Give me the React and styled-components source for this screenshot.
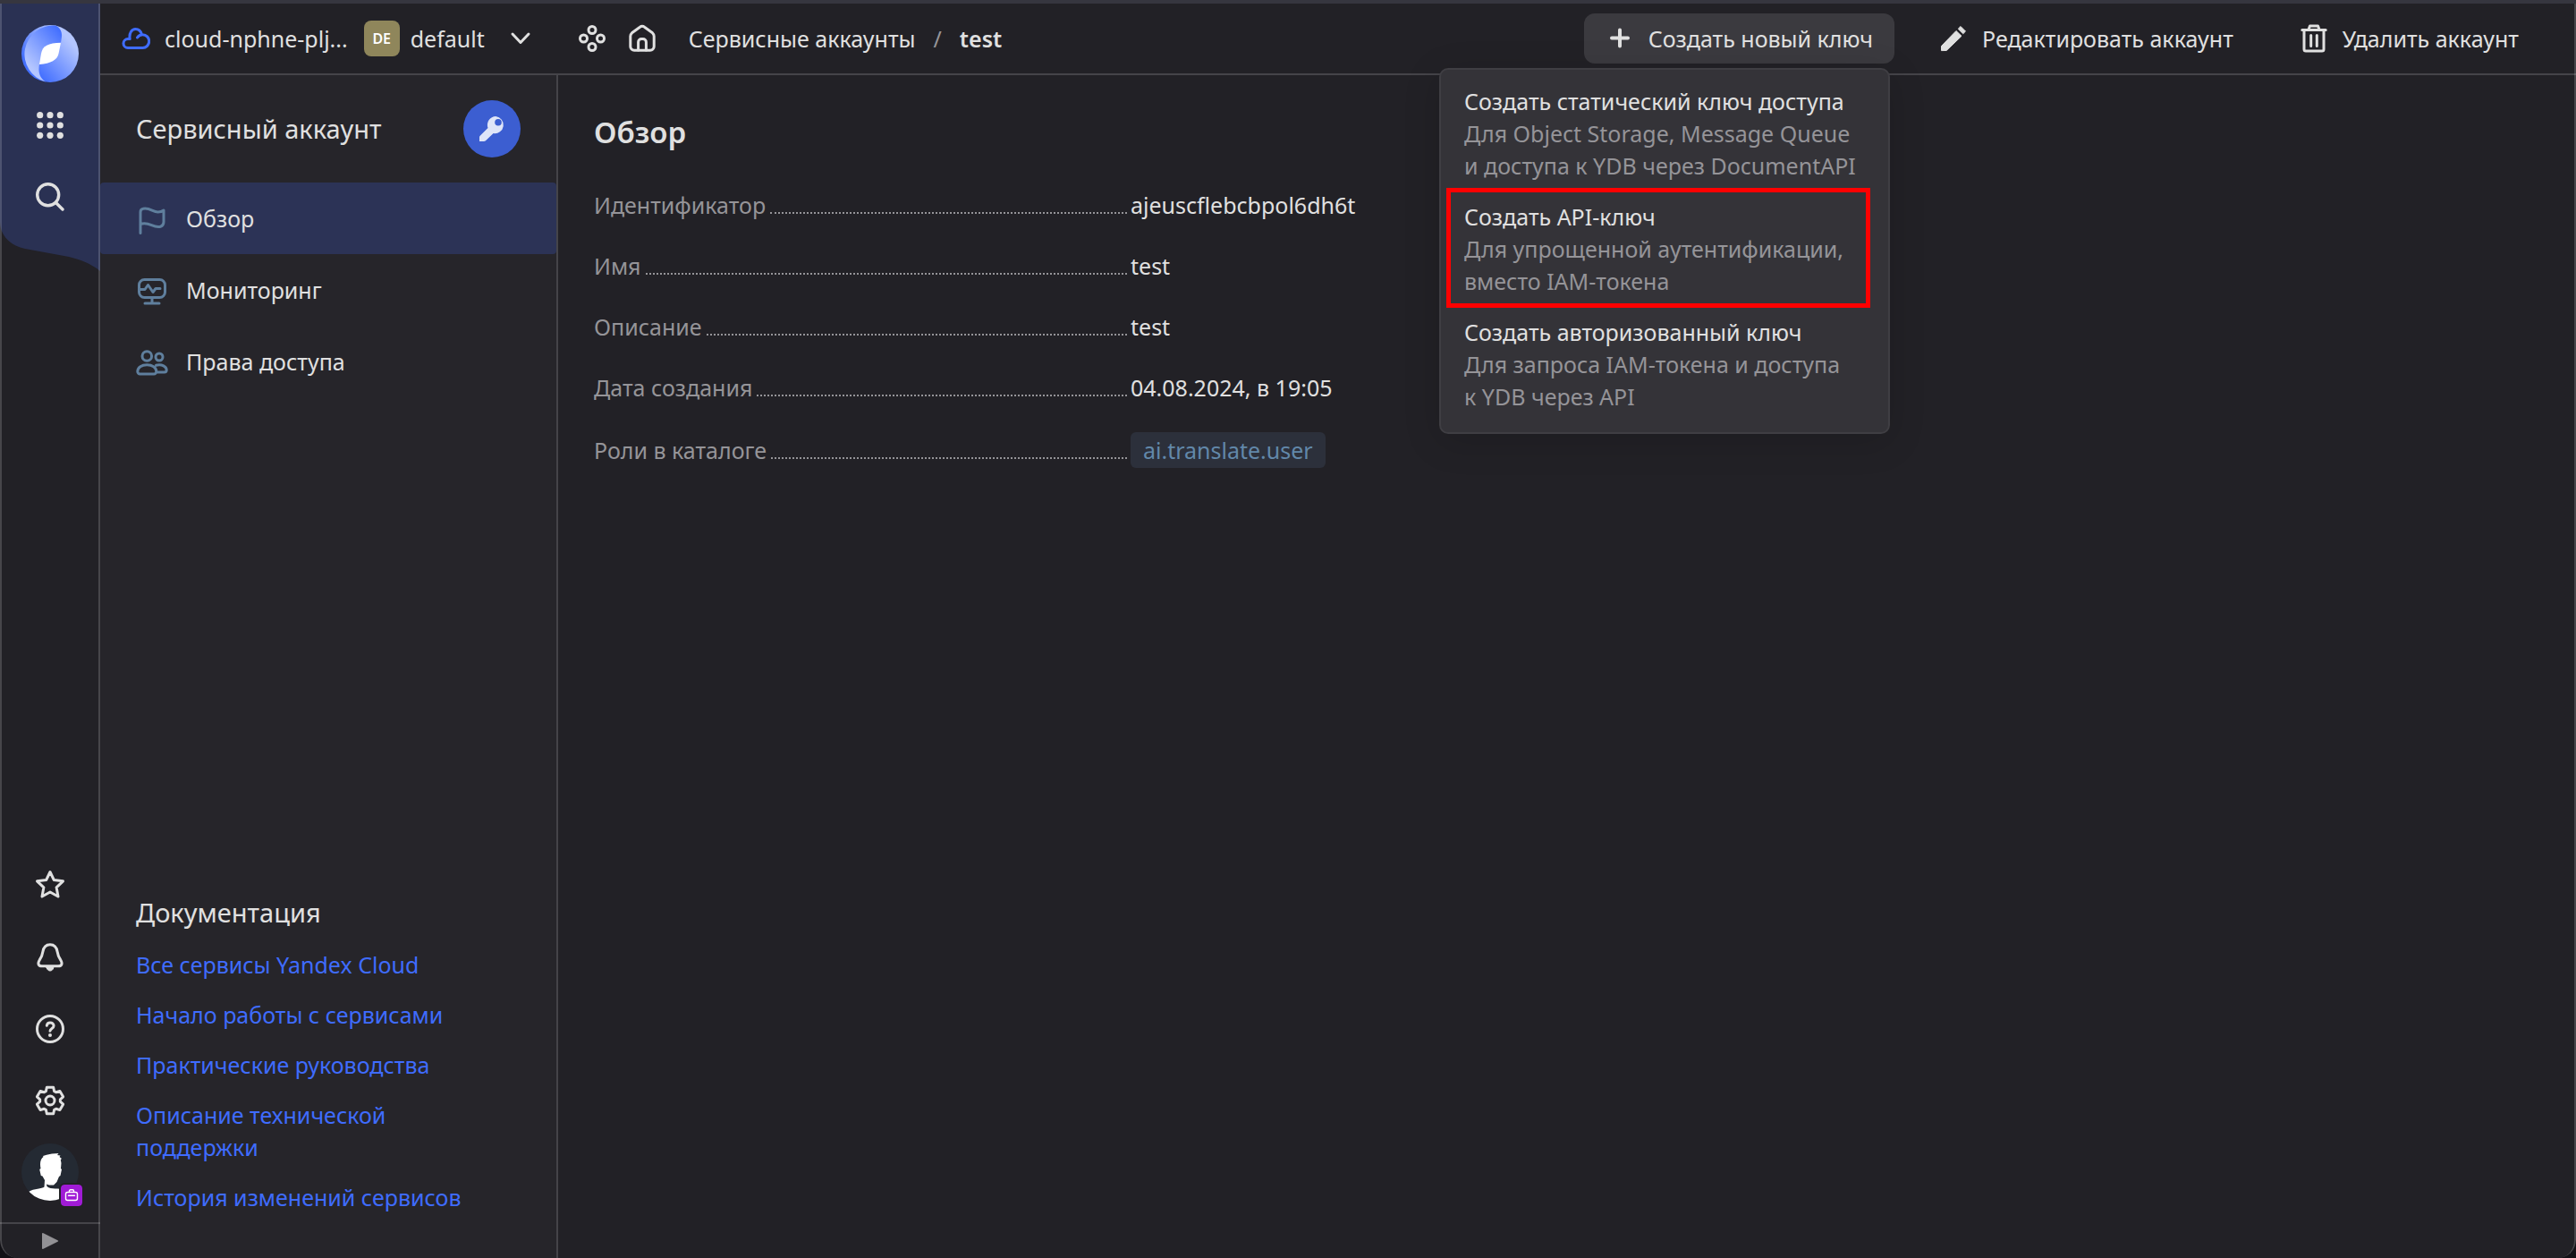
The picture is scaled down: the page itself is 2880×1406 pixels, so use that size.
import React from "react";
import styled, { createGlobalStyle } from "styled-components";

const color = {
  page: "#222126",
  side: "#26252a",
  line: "#454449",
  frame: "rgba(255, 255, 255, 0.17)",
  railTop: "#2a3153",
  active: "#2c3356",
  text: "#e0e0e0",
  muted: "#959498",
  link: "#3f6cff",
  misc: "#5f7f9d",
  popup: "#343338",
};

const GlobalStyle = createGlobalStyle`
  *, *::before, *::after { box-sizing: border-box; }
  body { margin: 0; background: #121116; }
  body, button { font-family: "Noto Sans", "Open Sans", sans-serif; font-size: 25px; line-height: 36px; }
  h1, h2, p, ul, dl, dd { margin: 0; padding: 0; }
  ul { list-style: none; }
  button { border: 0; padding: 0; background: none; color: inherit; cursor: pointer; }
  a { color: inherit; text-decoration: none; }
  svg { display: block; flex: none; }
`;

const Window = styled.div`
  position: relative;
  display: flex;
  min-height: 100vh;
  border-top: 4px solid #36363f;
  border-radius: 0 0 20px 20px;
  overflow: hidden;
  background: ${color.page};
  color: ${color.text};
  &::after {
    content: "";
    position: absolute;
    inset: 0;
    border: solid ${color.frame};
    border-width: 0 2px;
    border-radius: 0 0 20px 20px;
    pointer-events: none;
  }
`;

const Rail = styled.aside`
  position: relative;
  flex: none;
  display: flex;
  flex-direction: column;
  width: 112px;
  padding-top: 16px;
  &::after {
    content: "";
    position: absolute;
    inset: 0 0 0 auto;
    width: 2px;
    background: ${color.frame};
  }
`;

const Wave = styled.svg`
  position: absolute;
  top: 0;
  left: 0;
`;

const RailGroup = styled.div`
  position: relative;
  display: flex;
  flex-direction: column;
  ${(p) => p.$bottom && "margin-top: auto; padding-bottom: 16px;"}
`;

const RailButton = styled.button`
  display: flex;
  align-items: center;
  justify-content: center;
  height: 80px;
`;

const Avatar = styled.span`
  position: relative;
`;

const Badge = styled.span`
  position: absolute;
  right: -4px;
  bottom: -6px;
  border-radius: 4px;
  background: #a01bd6;
  outline: 2px solid ${color.page};
`;

const RailToggle = styled.button`
  display: flex;
  align-items: center;
  justify-content: center;
  height: 40px;
  border-top: 2px solid ${color.line};
`;

const Content = styled.div`
  flex: 1;
  min-width: 0;
  display: flex;
  flex-direction: column;
`;

const Header = styled.header`
  display: flex;
  align-items: center;
  height: 80px;
  padding: 0 40px 0 24px;
  border-bottom: 2px solid ${color.line};
  white-space: nowrap;
`;

const Switcher = styled.button`
  display: flex;
  align-items: center;
  gap: ${(p) => p.$gap}px;
  margin-right: ${(p) => p.$after}px;
`;

const FolderMark = styled.span`
  width: 40px;
  height: 40px;
  border-radius: 8px;
  background: #8f865b;
  color: #fff;
  font-size: 16px;
  font-weight: 600;
  line-height: 40px;
  text-align: center;
`;

const ChevronBox = styled.span`
  margin-left: 16px;
`;

const HeaderIcons = styled.nav`
  display: flex;
  gap: 24px;
  margin-right: 36px;
`;

const Crumbs = styled.nav`
  display: flex;
  gap: 20px;
`;

const Slash = styled.span`
  color: ${color.muted};
`;

const Current = styled.span`
  font-weight: 600;
`;

const Actions = styled.div`
  display: flex;
  gap: 26px;
  margin-left: auto;
`;

const MenuAnchor = styled.div`
  position: relative;
`;

const ActionButton = styled.button`
  display: flex;
  align-items: center;
  gap: 16px;
  height: 56px;
  padding: 0 24px;
  border-radius: 12px;
  background: ${(p) => (p.$filled ? "#3b3a3f" : "none")};
`;

const Menu = styled.ul`
  position: absolute;
  z-index: 1;
  top: 61px;
  right: 5px;
  width: 504px;
  padding: 8px 0 10px;
  border: 2px solid #3f3e43;
  border-radius: 10px;
  background: ${color.popup};
  box-shadow: 0 8px 40px rgba(0, 0, 0, 0.15);
  white-space: normal;
`;

const MenuItem = styled.li`
  position: relative;
  ${(p) =>
    p.$marked &&
    `&::after {
      content: "";
      position: absolute;
      inset: -5px 20px 0 6px;
      border: 5px solid #f00;
      pointer-events: none;
    }`}
`;

const MenuButton = styled.button`
  display: block;
  width: 100%;
  padding: 9px 26px 12px;
  text-align: left;
`;

const MenuTitle = styled.span`
  display: block;
`;

const MenuText = styled.span`
  display: block;
  color: ${color.muted};
`;

const Body = styled.div`
  flex: 1;
  display: flex;
`;

const Side = styled.aside`
  flex: none;
  display: flex;
  flex-direction: column;
  width: 512px;
  border-right: 2px solid ${color.line};
  background: ${color.side};
`;

const SideHead = styled.div`
  display: flex;
  align-items: center;
  justify-content: space-between;
  height: 120px;
  padding: 0 40px;
`;

const SideTitle = styled.h2`
  font-size: 29px;
  font-weight: 400;
  line-height: 40px;
`;

const KeyButton = styled.button`
  border-radius: 50%;
  background: #3c5ed1;
`;

const NavLink = styled.a`
  display: flex;
  align-items: center;
  gap: 20px;
  height: 80px;
  padding: 0 40px;
  border-radius: 4px;
  background: ${(p) => (p.$active ? color.active : "none")};
  svg {
    color: ${color.misc};
  }
`;

const Docs = styled.section`
  display: flex;
  flex-direction: column;
  gap: 20px;
  margin-top: auto;
  padding: 0 60px 50px 40px;
`;

const DocsList = styled.ul`
  display: flex;
  flex-direction: column;
  gap: 20px;
  color: ${color.link};
`;

const DocLink = styled.a`
  display: block;
`;

const Main = styled.main`
  flex: 1;
  min-width: 0;
  padding: 42px 40px;
`;

const Heading = styled.h1`
  margin-bottom: 41px;
  font-size: 33px;
  font-weight: 600;
  line-height: 44px;
`;

const Details = styled.dl`
  display: flex;
  flex-direction: column;
  gap: 32px;
`;

const Detail = styled.div`
  display: flex;
  align-items: center;
`;

const Term = styled.dt`
  flex: none;
  display: flex;
  align-items: baseline;
  width: 600px;
  color: ${color.muted};
  &::after {
    content: "";
    flex: 1;
    margin: 0 4px 0 5px;
    border-bottom: 2px dotted ${color.muted};
  }
`;

const Role = styled.span`
  display: block;
  padding: 0 14px;
  border-radius: 6px;
  background: #2c303b;
  color: #6288aa;
  line-height: 40px;
`;

function Icon({ size = 32, width = 3, children }) {
  return (
    <svg width={size} height={size} viewBox={`0 0 ${size} ${size}`} fill="none" stroke="currentColor" strokeWidth={width} strokeLinecap="round" strokeLinejoin="round" aria-hidden="true">
      {children}
    </svg>
  );
}

const Logo = () => (
  <svg width="64" height="64" viewBox="0 0 64 64" aria-hidden="true">
    <defs>
      <linearGradient id="lobeA" gradientUnits="userSpaceOnUse" x1="44" y1="8" x2="6" y2="42">
        <stop offset="0" stopColor="#4470ff" />
        <stop offset="1" stopColor="#b4c6ff" />
      </linearGradient>
      <linearGradient id="lobeB" gradientUnits="userSpaceOnUse" x1="20" y1="56" x2="58" y2="22">
        <stop offset="0" stopColor="#4470ff" />
        <stop offset="1" stopColor="#b4c6ff" />
      </linearGradient>
    </defs>
    <circle cx="32" cy="32" r="32" fill="url(#lobeB)" />
    <path d="M38.7 0.7C43.5 3 45.5 8 45 13L44 20L20 44C19 49 18.5 58 27 63.4A32 32 0 0 1 38.7 0.7Z" fill="url(#lobeA)" />
    <path d="M44 19.7C30 20 23.5 23 22 32L20 44C33 43 40 39 41.5 32Z" fill="#fff" />
  </svg>
);

const Person = () => (
  <svg width="64" height="64" viewBox="0 0 64 64" aria-hidden="true">
    <clipPath id="face"><circle cx="32" cy="32" r="32" /></clipPath>
    <circle cx="32" cy="32" r="32" fill="#242a33" />
    <path clipPath="url(#face)" fill="#fff" d="M21.5 28C20.5 22 21 17.5 24.5 15L24 14L28 12.8L34 11.6L41.5 11L40 13L43.5 13.5L42.5 15L45 17L43.8 18L44.5 22L44 28L45 29L43.5 36L42 37L39.5 43L36 46.5H31L28 45.5L28.5 48C33 52 42 49 48 52V64H16L8 54C14 50 23 51 25.5 48.5L26 41L23.5 36.5L21.8 36L20.2 29Z" />
  </svg>
);

const Briefcase = () => (
  <svg width="24" height="24" viewBox="0 0 24 24" fill="none" stroke="#fff" strokeWidth="1.4" strokeLinecap="round" aria-hidden="true">
    <rect x="5.5" y="8.5" width="13" height="9" rx="2" />
    <path d="M9.5 8V7a1.2 1.2 0 0 1 1.2-1.2h2.6A1.2 1.2 0 0 1 14.5 7v1M8.5 12.3h7" />
  </svg>
);

const gearPoints = Array.from({ length: 6 }, (_, i) => i * 60 - 90)
  .flatMap((a) => [[a - 24, 11.4], [a - 14, 15.2], [a + 14, 15.2], [a + 24, 11.4]])
  .map(([a, r]) => `${18 + r * Math.cos((a * Math.PI) / 180)},${18 + r * Math.sin((a * Math.PI) / 180)}`)
  .join(" ");

const icons = {
  apps: (
    <Icon width={0}>
      {[4.7, 16, 27.3].map((y) => [4.7, 16, 27.3].map((x) => <circle key={`${x}-${y}`} cx={x} cy={y} r="3.6" fill="currentColor" />))}
    </Icon>
  ),
  search: <Icon width={3.4}><circle cx="13.7" cy="13.7" r="12" /><path d="M22.7 22.7L30 30" /></Icon>,
  star: <Icon size={36}><path d="M18 2.5L22.3 11.5L32.5 12.8L25.1 19.8L27 30L18 25L9 30L10.900 19.8L3.5 12.8L13.7 11.5Z" /></Icon>,
  bell: (
    <Icon size={36}>
      <path d="M18 3.7C13 3.7 10.5 7.5 9.8 12C9.2 16.5 8 18.5 6.2 21C3.8 25 4.8 27.8 9 27.8H27C31.2 27.8 32.2 25 29.8 21C28 18.5 26.8 16.5 26.2 12C25.5 7.5 23 3.7 18 3.7Z" />
      <path d="M14 29.5h8c-1 2.8-2.5 3.5-4 3.5s-3-.7-4-3.5z" fill="currentColor" strokeWidth="1" />
    </Icon>
  ),
  help: (
    <Icon size={36}>
      <circle cx="18" cy="18" r="14.5" />
      <path d="M14.3 14.2c.4-2.3 2-3.2 3.8-3.2 2.2 0 4 1.3 4 3.5 0 3-4 3-4.1 5.8" />
      <circle cx="18" cy="25" r="2" fill="currentColor" stroke="none" />
    </Icon>
  ),
  gear: <Icon size={36}><polygon points={gearPoints} /><circle cx="18" cy="18" r="5" /></Icon>,
  cloud: <Icon><path d="M17.5 15C19 12.5 21.5 11.7 23.5 11.7A7.2 7.4 0 0 1 23.5 26.5H7A5 5 0 0 1 7 16.5H9.2C8 10 11.5 5.5 15.5 5.5C19 5.5 21.5 8 22.5 11.5" /></Icon>,
  chevron: <Icon size={24}><path d="M3 7L12 16.5L21 7" /></Icon>,
  services: (
    <Icon>
      {[[16, 6.5], [6.5, 16], [25.5, 16], [16, 25.5]].map(([x, y]) => <circle key={`${x}-${y}`} cx={x} cy={y} r="4" />)}
    </Icon>
  ),
  home: (
    <Icon>
      <path d="M2.8 13.5a5 5 0 0 1 1.7-3.7L13.5 3.2a4 4 0 0 1 5 0L27.5 9.8a5 5 0 0 1 1.7 3.7V25a4.3 4.3 0 0 1-4.3 4.3H7.1A4.3 4.3 0 0 1 2.8 25Z" />
      <path d="M11.6 29V20a3.5 3.5 0 0 1 3.5-3.5h1.8A3.5 3.5 0 0 1 20.4 20V29" />
    </Icon>
  ),
  plus: <Icon width={4}><path d="M7 15.5H25M16 6.5V24.5" /></Icon>,
  pencil: (
    <Icon width={1}>
      <path fill="currentColor" d="M2.5 29.2V24.5L19 7.5L25 13.3L8.5 29.2ZM21.5 5L24 2.5L29.5 8L27 10.5Z" />
    </Icon>
  ),
  trash: <Icon><path d="M2.8 6.5H29.2M5 7V28a2 2 0 0 0 2 2H25a2 2 0 0 0 2-2V7M10 6L11.5 2H20.5L22 6M12.7 12.5V24.5M19.3 12.5V24.5" /></Icon>,
  key: (
    <svg width="64" height="64" viewBox="0 0 64 64" aria-hidden="true">
      <path fill="#dfe5f8" fillRule="evenodd" d="M36.3 18A9.6 9.6 0 1 1 33.6 37L25 45.3Q24 46 23 46H18V41.5Q18 40.5 18.7 39.8L27.5 31A9.6 9.6 0 0 1 36.3 18ZM39 21A3.8 3.8 0 1 0 39 28.6A3.8 3.8 0 0 0 39 21Z" />
    </svg>
  ),
  flag: <Icon size={36}><path d="M5 34.5V11C5 8.5 6.5 7.5 8 7.2C15 5.5 19 11 24.5 11C27.5 11 29.5 10.2 31 9V22C31 25 30 26.5 27.5 27.2C19 29.5 15 21 5 24.5" /></Icon>,
  monitor: (
    <Icon size={36}>
      <rect x="3.5" y="6.5" width="29" height="20" rx="6" />
      <path d="M5 17.5H10L13.5 12.5L19 20.5L22 16.5H27M18 27V32.5M10 33H26" />
    </Icon>
  ),
  people: (
    <Icon size={36}>
      <circle cx="12.3" cy="12" r="5.3" />
      <circle cx="26" cy="13" r="4" />
      <path d="M4.5 32A2.7 2.7 0 0 1 1.8 29.3C1.8 24.5 6.5 21.8 12.3 21.8S22.8 24.5 22.8 29.3A2.7 2.7 0 0 1 20.1 32ZM22.5 22.3C29 20.5 34.2 24 34.2 27.5A2.5 2.5 0 0 1 31.7 30H23" />
    </Icon>
  ),
};

const railTools = [
  ["Избранное", icons.star],
  ["Уведомления", icons.bell],
  ["Помощь", icons.help],
  ["Настройки", icons.gear],
];

const menu = [
  ["Создать статический ключ доступа", "Для Object Storage, Message Queue и\u00a0доступа к\u00a0YDB через DocumentAPI"],
  ["Создать API-ключ", "Для упрощенной аутентификации, вместо IAM-токена"],
  ["Создать авторизованный ключ", "Для запроса IAM-токена и\u00a0доступа к\u00a0YDB через API"],
];

const sections = [
  ["Обзор", icons.flag],
  ["Мониторинг", icons.monitor],
  ["Права доступа", icons.people],
];

const docs = [
  "Все сервисы Yandex Cloud",
  "Начало работы с сервисами",
  "Практические руководства",
  "Описание технической поддержки",
  "История изменений сервисов",
];

const details = [
  ["Идентификатор", "ajeuscflebcbpol6dh6t"],
  ["Имя", "test"],
  ["Описание", "test"],
  ["Дата создания", "04.08.2024, в 19:05"],
  ["Роли в каталоге", <Role key="role">ai.translate.user</Role>],
];

const CloudMark = styled.span`
  color: #3f6cff;
`;

const ToggleMark = styled.span`
  color: #929195;
`;

export default function App() {
  return (
    <Window>
      <GlobalStyle />
      <Rail>
        <Wave width="112" height="300" viewBox="0 0 112 300" aria-hidden="true">
          <path fill={color.railTop} d="M0 0H112V299C101 290 89 286 77 283L28 274C10 270 0 258 0 244Z" />
        </Wave>
        <RailGroup>
          <RailButton aria-label="Yandex Cloud"><Logo /></RailButton>
          <RailButton aria-label="Все сервисы">{icons.apps}</RailButton>
          <RailButton aria-label="Поиск">{icons.search}</RailButton>
        </RailGroup>
        <RailGroup $bottom>
          {railTools.map(([label, icon]) => (
            <RailButton key={label} aria-label={label}>{icon}</RailButton>
          ))}
          <RailButton aria-label="Профиль">
            <Avatar>
              <Person />
              <Badge><Briefcase /></Badge>
            </Avatar>
          </RailButton>
        </RailGroup>
        <RailToggle aria-label="Развернуть">
          <ToggleMark>
            <svg width="20" height="20" viewBox="0 0 20 20" aria-hidden="true">
              <path fill="currentColor" d="M1 2Q1 0.5 2.5 1.2L18.5 9.2Q20 10 18.5 10.8L2.5 18.8Q1 19.5 1 18Z" />
            </svg>
          </ToggleMark>
        </RailToggle>
      </Rail>
      <Content>
        <Header>
          <Switcher $gap={16} $after={18}>
            <CloudMark>{icons.cloud}</CloudMark>
            cloud-nphne-plj...
          </Switcher>
          <Switcher $gap={12} $after={52}>
            <FolderMark>DE</FolderMark>
            default
            <ChevronBox>{icons.chevron}</ChevronBox>
          </Switcher>
          <HeaderIcons>
            <a href="#services" aria-label="Сервисы">{icons.services}</a>
            <a href="#home" aria-label="Главная">{icons.home}</a>
          </HeaderIcons>
          <Crumbs>
            <a href="#accounts">Сервисные аккаунты</a>
            <Slash>/</Slash>
            <Current>test</Current>
          </Crumbs>
          <Actions>
            <MenuAnchor>
              <ActionButton $filled>{icons.plus}Создать новый ключ</ActionButton>
              <Menu>
                {menu.map(([title, text], i) => (
                  <MenuItem key={title} $marked={i === 1}>
                    <MenuButton>
                      <MenuTitle>{title}</MenuTitle>
                      <MenuText>{text}</MenuText>
                    </MenuButton>
                  </MenuItem>
                ))}
              </Menu>
            </MenuAnchor>
            <ActionButton>{icons.pencil}Редактировать аккаунт</ActionButton>
            <ActionButton>{icons.trash}Удалить аккаунт</ActionButton>
          </Actions>
        </Header>
        <Body>
          <Side>
            <SideHead>
              <SideTitle>Сервисный аккаунт</SideTitle>
              <KeyButton aria-label="Сервисный аккаунт">{icons.key}</KeyButton>
            </SideHead>
            <nav>
              {sections.map(([label, icon], i) => (
                <NavLink key={label} href="#section" $active={i === 0}>{icon}{label}</NavLink>
              ))}
            </nav>
            <Docs>
              <SideTitle>Документация</SideTitle>
              <DocsList>
                {docs.map((label) => (
                  <li key={label}><DocLink href="#docs">{label}</DocLink></li>
                ))}
              </DocsList>
            </Docs>
          </Side>
          <Main>
            <Heading>Обзор</Heading>
            <Details>
              {details.map(([term, value]) => (
                <Detail key={term}>
                  <Term>{term}</Term>
                  <dd>{value}</dd>
                </Detail>
              ))}
            </Details>
          </Main>
        </Body>
      </Content>
    </Window>
  );
}
